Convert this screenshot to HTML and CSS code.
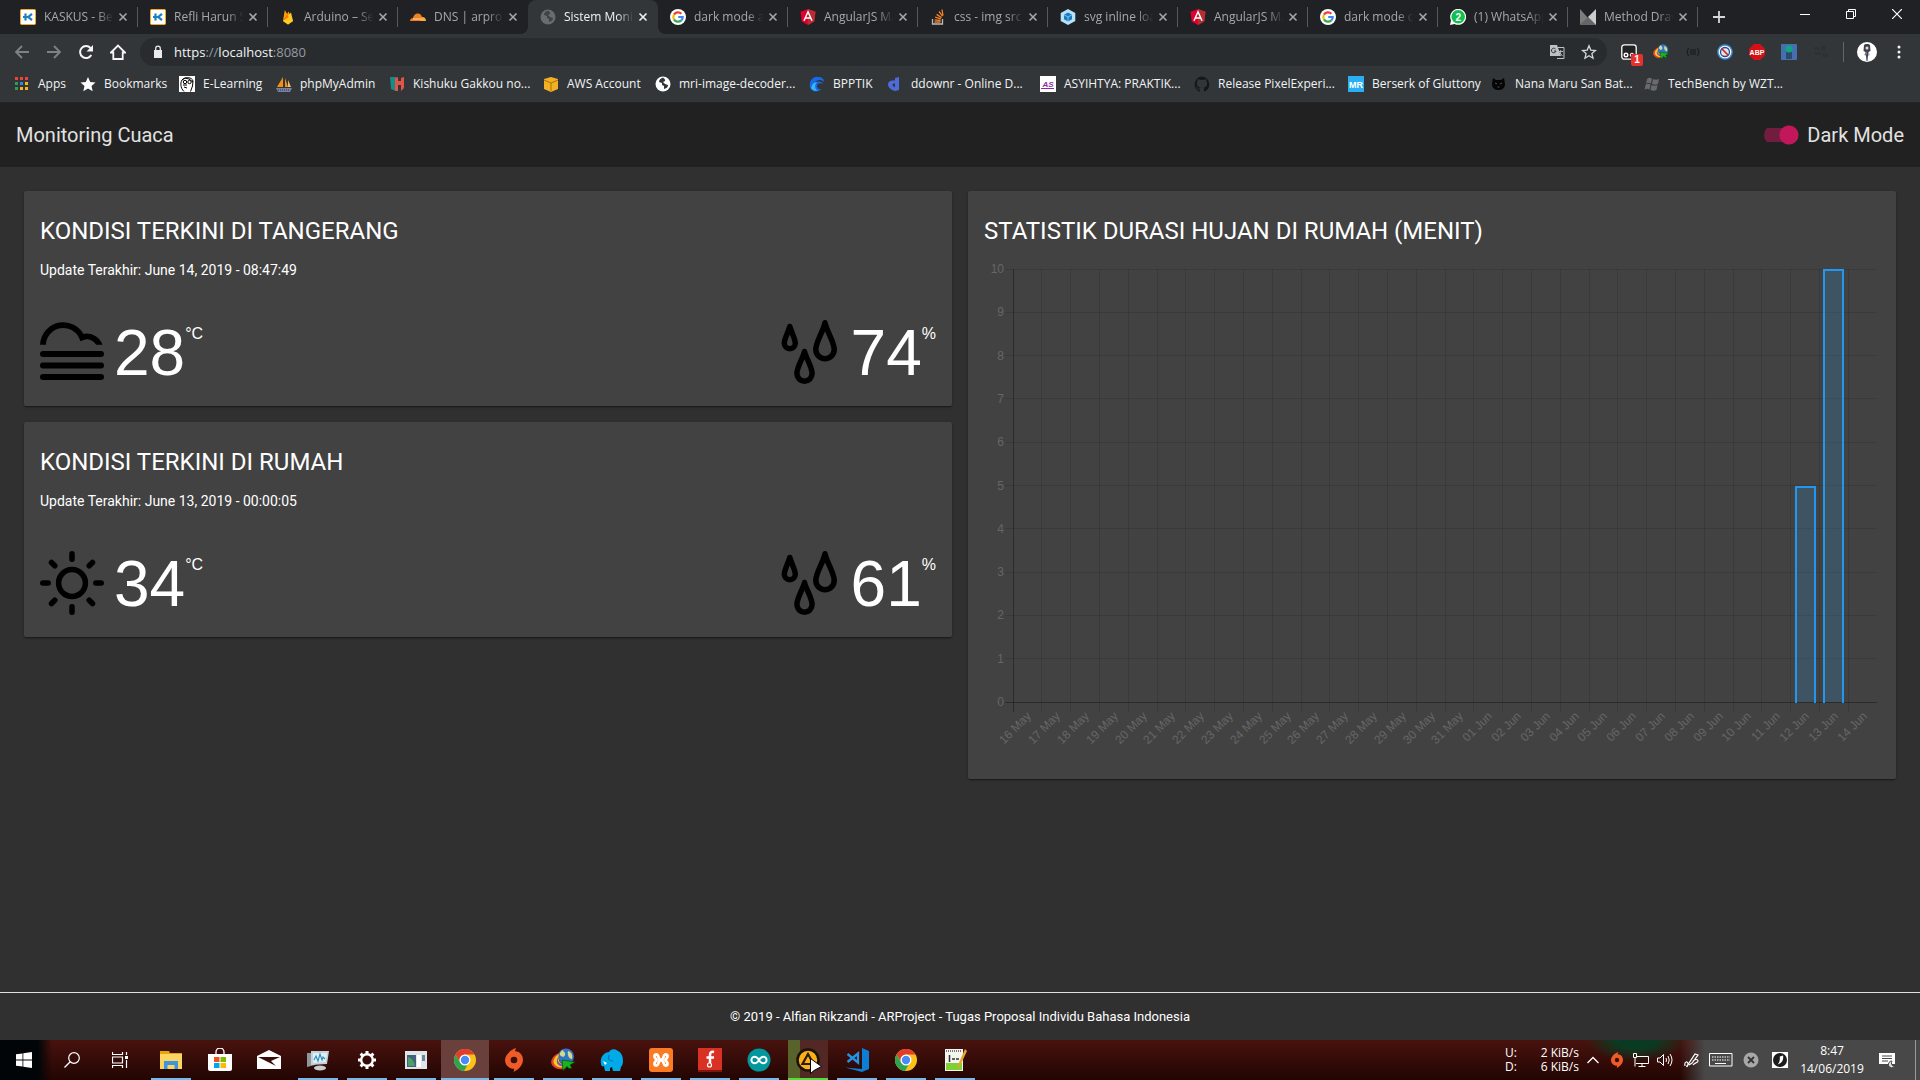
FILE: index.html
```html
<!DOCTYPE html>
<html lang="id">
<head>
<meta charset="utf-8">
<meta name="viewport" content="width=device-width, initial-scale=1">
<title>Sistem Monitoring Cuaca</title>
<link rel="stylesheet" href="styles.css">
</head>
<body>

<svg class="sprite" aria-hidden="true">
  <symbol id="i-close" viewBox="0 0 10 10"><path d="M1.5 1.5l7 7M8.500 1.500l-7 7" stroke="currentColor" stroke-width="1.6" fill="none"/></symbol>
  <symbol id="i-kaskus" viewBox="0 0 16 16"><rect x=".5" y=".5" width="15" height="15" rx="1" fill="#fff" stroke="#f7a823"/><path d="M5.500 4.500v7M12 4.800L8.200 8l3.800 3.200M3 8h6" stroke="#1c7fc4" stroke-width="2.200" fill="none"/></symbol>
  <symbol id="i-firebase" viewBox="0 0 16 16"><path d="M3 12L4.800 1l2.400 4L8.500 2.500 13 12l-5 3.500z" fill="#ffa000"/><path d="M3 12l8-8.500L13 12l-5 3.500z" fill="#ffca28"/><path d="M3 12l4.200-7 1.500 3z" fill="#f57c00"/></symbol>
  <symbol id="i-cloudflare" viewBox="0 0 16 16"><path d="M0 12c0-2 1.500-3 3-3 .5-3 3-5 5.500-4.500 2 .3 3 2 3.500 3.500l-1 4z" fill="#f38020"/><path d="M10.500 12l1-4c3-.2 4.500 1.500 4.500 4z" fill="#faae40"/><path d="M3 10h8" stroke="#fff" stroke-width=".7"/></symbol>
  <symbol id="i-globe" viewBox="0 0 16 16"><circle cx="8" cy="8" r="7.500" fill="currentColor"/><path d="M8 1.500c-3 1-4 3-4 4.500l3 1v2l2 1v3c3-1 4-2 4-4l-3-1-2-2 2-1V3.500z" fill="var(--land)"/></symbol>
  <symbol id="i-google" viewBox="0 0 16 16"><circle cx="8" cy="8" r="8" fill="#fff"/><g fill="none" stroke-width="2.200"><path d="M11.400 4.700A4.700 4.700 0 0 0 4 5.600" stroke="#ea4335"/><path d="M4 5.600a4.700 4.700 0 0 0 0 4.800" stroke="#fbbc05"/><path d="M4 10.400a4.700 4.700 0 0 0 7.300 1" stroke="#34a853"/><path d="M11.300 11.400A4.700 4.700 0 0 0 12.700 8H8.200" stroke="#4285f4"/></g></symbol>
  <symbol id="i-angular" viewBox="0 0 16 16"><path d="M8 0l7.500 2.700-1.200 9.800L8 16l-6.300-3.500L.5 2.700z" fill="#dd0031"/><path d="M8 0l7.500 2.700-1.200 9.800L8 16z" fill="#b52e31"/><path d="M4 11.800L8 2.800l4 9M5.500 9h5" stroke="#fff" stroke-width="1.500" fill="none"/></symbol>
  <symbol id="i-stack" viewBox="0 0 16 16"><path d="M2.500 10v5h10v-5" stroke="#bcbbbb" stroke-width="1.300" fill="none"/><path d="M4.500 13h6M4.600 10.800l6 .7M5.200 8.200l5.600 1.700M6.600 5.400l5 3.200M9 2.500l3.600 4.700M12 .5l1 6" stroke="#f48024" stroke-width="1.300"/></symbol>
  <symbol id="i-webpack" viewBox="0 0 16 16"><path d="M8 0l7.300 4v8L8 16 .7 12V4z" fill="#b6e2f8"/><path d="M8 3.500l4 2.200v4.600L8 12.500l-4-2.200V5.700z" fill="#1c78c0"/><path d="M8 8v4.500M8 8l4-2.200M8 8L4 5.800" stroke="#8ed6fb" stroke-width=".8"/></symbol>
  <symbol id="i-whatsapp" viewBox="0 0 16 16"><path d="M0 16l1-4.500A8 8 0 1 1 4.500 15z" fill="#fff"/><circle cx="8.200" cy="7.800" r="6.800" fill="#12c04f"/><text x="8.200" y="11.500" text-anchor="middle" font-family="Liberation Sans, sans-serif" font-weight="700" font-size="10" fill="#fff">2</text></symbol>
  <symbol id="i-method" viewBox="0 0 16 16"><path d="M0 0l8 9-8 7z" fill="#7d7d7d"/><path d="M0 16L8 8l8 8z" fill="#666"/><path d="M16 0L8 8l8 8z" fill="#ccc"/></symbol>
  <symbol id="i-chrome" viewBox="0 0 24 24"><circle cx="12" cy="12" r="11" fill="#fbc116"/><path d="M2.500 6.500a11 11 0 0 1 19 0H12A5.500 5.500 0 0 0 7 14z" fill="#e33b2e"/><path d="M2.500 6.500A11 11 0 0 0 11 23l4.800-8.300A5.500 5.500 0 0 1 7.200 14.700z" fill="#31a350"/><circle cx="12" cy="12" r="5.500" fill="#fff"/><circle cx="12" cy="12" r="4.200" fill="#4a8af4"/></symbol>
  <symbol id="i-origin" viewBox="0 0 24 24"><path d="M14 0c-.5 1.500-1 2.500-.8 3.200C18 3.500 21 7 21 12c0 5-5 10-9.500 12 .6-1.500.8-2.500.6-3.300C6.500 20.500 3 17 3 12 3 7 9 1.500 14 0z" fill="#ee5b28"/><circle cx="12" cy="12" r="3.300" fill="#38100a"/></symbol>
  <symbol id="i-idm" viewBox="0 0 24 24"><circle cx="15" cy="8.500" r="8" fill="#3474c4"/><path d="M11 2c3 2 5 5 1 7-2-1-4-2-3-4zM17 3c4 1 5 5 4 8-3 0-5-4-4-8z" fill="#cfdb91"/><path d="M8 5C1 8-2 14 2 18c3 4 9 4 13 2l-1-4c-5 1-8-4-6-11z" fill="#e6442a"/><path d="M8 6C3 9 1 14 4 17c3 3 7 3 11 2l-1-3c-5 1-8-4-6-10z" fill="#f5cd1a"/><path d="M8 8c-3 5 0 8 6 9v1.500C7 19 3 14 8 8z" fill="#7a4fc7"/><path d="M11 12l13 2-5 3 2 3-3 .5-2-2-4 4z" fill="#15b61c" stroke="#074a0a" stroke-width=".7"/></symbol>
</svg>

<div class="browser">
  <header class="chrome">
    <div class="tabstrip">
      <nav class="tabs" aria-label="Tab">
        <div class="tab"><svg class="fav"><use href="#i-kaskus"/></svg><span class="tab-title">KASKUS - Berb</span><button class="tab-close" aria-label="Tutup"><svg><use href="#i-close"/></svg></button></div>
        <div class="tab"><svg class="fav"><use href="#i-kaskus"/></svg><span class="tab-title">Refli Harun Se</span><button class="tab-close" aria-label="Tutup"><svg><use href="#i-close"/></svg></button></div>
        <div class="tab"><svg class="fav"><use href="#i-firebase"/></svg><span class="tab-title">Arduino – Serv</span><button class="tab-close" aria-label="Tutup"><svg><use href="#i-close"/></svg></button></div>
        <div class="tab before-active"><svg class="fav"><use href="#i-cloudflare"/></svg><span class="tab-title">DNS | arproject</span><button class="tab-close" aria-label="Tutup"><svg><use href="#i-close"/></svg></button></div>
        <div class="tab active"><svg class="fav globe-dim"><use href="#i-globe"/></svg><span class="tab-title">Sistem Monito</span><button class="tab-close" aria-label="Tutup"><svg><use href="#i-close"/></svg></button></div>
        <div class="tab"><svg class="fav"><use href="#i-google"/></svg><span class="tab-title">dark mode ang</span><button class="tab-close" aria-label="Tutup"><svg><use href="#i-close"/></svg></button></div>
        <div class="tab"><svg class="fav"><use href="#i-angular"/></svg><span class="tab-title">AngularJS Mat</span><button class="tab-close" aria-label="Tutup"><svg><use href="#i-close"/></svg></button></div>
        <div class="tab"><svg class="fav"><use href="#i-stack"/></svg><span class="tab-title">css - img src sv</span><button class="tab-close" aria-label="Tutup"><svg><use href="#i-close"/></svg></button></div>
        <div class="tab"><svg class="fav"><use href="#i-webpack"/></svg><span class="tab-title">svg inline load</span><button class="tab-close" aria-label="Tutup"><svg><use href="#i-close"/></svg></button></div>
        <div class="tab"><svg class="fav"><use href="#i-angular"/></svg><span class="tab-title">AngularJS Mat</span><button class="tab-close" aria-label="Tutup"><svg><use href="#i-close"/></svg></button></div>
        <div class="tab"><svg class="fav"><use href="#i-google"/></svg><span class="tab-title">dark mode css</span><button class="tab-close" aria-label="Tutup"><svg><use href="#i-close"/></svg></button></div>
        <div class="tab"><svg class="fav"><use href="#i-whatsapp"/></svg><span class="tab-title">(1) WhatsApp</span><button class="tab-close" aria-label="Tutup"><svg><use href="#i-close"/></svg></button></div>
        <div class="tab"><svg class="fav"><use href="#i-method"/></svg><span class="tab-title">Method Draw</span><button class="tab-close" aria-label="Tutup"><svg><use href="#i-close"/></svg></button></div>
        <button class="new-tab" aria-label="Tab baru"><svg viewBox="0 0 14 14"><path d="M7 1v12M1 7h12" stroke="currentColor" stroke-width="1.800"/></svg></button>
      </nav>
      <div class="window-buttons">
        <button aria-label="Minimalkan"><svg viewBox="0 0 10 10"><path d="M0 5.500h10" stroke="currentColor"/></svg></button>
        <button aria-label="Pulihkan"><svg viewBox="0 0 10 10"><path d="M.5 2.500h7v7h-7zM2.500 2.500v-2h7v7h-2" fill="none" stroke="currentColor"/></svg></button>
        <button aria-label="Tutup jendela"><svg viewBox="0 0 10 10"><path d="M0 0l10 10M10 0L0 10" stroke="currentColor" stroke-width="1.200"/></svg></button>
      </div>
    </div>

    <div class="toolbar">
      <button class="nav-btn dim" aria-label="Kembali"><svg viewBox="0 0 16 16"><path d="M15 8H2M8 2L2 8l6 6" fill="none" stroke="currentColor" stroke-width="1.800"/></svg></button>
      <button class="nav-btn dim" aria-label="Maju"><svg viewBox="0 0 16 16"><path d="M1 8h13M8 2l6 6-6 6" fill="none" stroke="currentColor" stroke-width="1.800"/></svg></button>
      <button class="nav-btn" aria-label="Muat ulang"><svg viewBox="0 0 16 16"><path d="M13.300 11A6 6 0 1 1 12.500 4" fill="none" stroke="currentColor" stroke-width="2"/><path d="M15 1v6.500H8.500z" fill="currentColor"/></svg></button>
      <button class="nav-btn" aria-label="Beranda"><svg viewBox="0 0 16 16"><path d="M1 8.500L8 1.500l7 7h-2.300V15H3.300V8.500z" fill="none" stroke="currentColor" stroke-width="1.800"/></svg></button>
      <div class="omnibox">
        <svg class="lock" viewBox="0 0 10 14"><path d="M1 5h8v8H1z" fill="currentColor"/><path d="M2.700 5.500V3.500a2.300 2.300 0 0 1 4.600 0v2" fill="none" stroke="currentColor" stroke-width="1.300"/></svg>
        <span class="url">https<i>://</i>localhost<i>:8080</i></span>
        <button class="omni-btn" aria-label="Terjemahkan"><svg viewBox="0 0 16 16"><path d="M1 1h7l4 11H1z" fill="#bdc1c6"/><path d="M9 3.500h6v11H8" fill="none" stroke="#bdc1c6"/><path d="M6.500 5A2.300 2.300 0 1 0 7 7H5" fill="none" stroke="#33373a"/><path d="M9.500 7.500h4.500M11.700 6v1.500c-.3 2-1 3-1.700 4M11 9l2.500 3" stroke="#bdc1c6" fill="none" stroke-width=".9"/></svg></button>
        <button class="omni-btn" aria-label="Tambahkan bookmark"><svg viewBox="0 0 16 16"><path d="M8 1.800l1.800 4.300 4.700.4-3.600 3.100 1.100 4.600L8 11.700l-4 2.500 1.100-4.600L1.500 6.500l4.700-.4z" fill="none" stroke="#d5d8db" stroke-width="1.300"/></svg></button>
      </div>
      <div class="extensions">
        <button aria-label="Tampermonkey"><svg viewBox="0 0 16 16"><rect x=".8" y=".8" width="14.400" height="14.400" rx="2.500" fill="#222" stroke="#fff" stroke-width="1.300"/><circle cx="5" cy="11" r="1.800" fill="none" stroke="#fff" stroke-width="1.400"/><circle cx="11" cy="11" r="1.800" fill="none" stroke="#fff"/></svg><span class="badge">1</span></button>
        <button aria-label="Internet Download Manager"><svg><use href="#i-idm"/></svg></button>
        <button aria-label="JSON"><svg viewBox="0 0 16 16"><path d="M4 4Q2.500 4 2.800 6T1.500 8q1.500 0 1.300 2T4 12M12 4q1.500 0 1.200 2t1.300 2q-1.500 0-1.300 2T12 12M5 6h6M5 8h6M5 10h6" fill="none" stroke="#17191b"/></svg></button>
        <button aria-label="Pemblokir"><svg viewBox="0 0 16 16"><circle cx="8" cy="8" r="7.800" fill="#3a8fd8"/><circle cx="8" cy="8" r="6.300" fill="#fff"/><circle cx="8" cy="8" r="4.500" fill="#dfe4ee" stroke="#35477c" stroke-width="1.300"/><path d="M5 5l6 6" stroke="#d52525" stroke-width="1.700"/></svg></button>
        <button aria-label="Adblock Plus"><svg viewBox="0 0 16 16"><path d="M5 0h6l5 5v6l-5 5H5l-5-5V5z" fill="#d80f13"/><text x="8" y="10.500" text-anchor="middle" font-family="Liberation Sans, sans-serif" font-weight="700" font-size="7" fill="#fff">ABP</text></svg></button>
        <button aria-label="Ekstensi"><svg viewBox="0 0 16 16"><rect width="16" height="16" rx="1" fill="#456fae"/><rect x="5" y="6" width="6" height="9" fill="#2d4a6c"/><circle cx="8" cy="5" r="3.600" fill="#11a587"/></svg></button>
        <button aria-label="Ekstensi nonaktif"><svg viewBox="0 0 16 16"><path d="M1 3h5v3H1zM8 2h5v4H8zM2 8h6v3H2zM9 9h6v4H9z" fill="#2e3134"/></svg></button>
      </div>
      <button class="avatar" aria-label="Profil"><svg viewBox="0 0 20 20"><circle cx="10" cy="10" r="10" fill="#fff"/><path d="M7 3l1.500-1h3l1.500 1 .5 6-2 1 1 3-1.500.5L10.500 19h-1L9 13.500 7.500 13l1-3-2-1z" fill="#3e4350"/><circle cx="10" cy="6" r="1.500" fill="#f3d3c6"/><path d="M8.500 10h1v3h-1zM11 10h1v3h-1z" fill="#9ba4b4"/></svg></button>
      <button class="menu" aria-label="Menu"><svg viewBox="0 0 4 16"><circle cx="2" cy="3" r="1.500"/><circle cx="2" cy="8" r="1.500"/><circle cx="2" cy="13" r="1.500"/></svg></button>
    </div>

    <nav class="bookmarks" aria-label="Bookmark">
      <a href="#"><svg viewBox="0 0 16 16"><path d="M1 1h3v3H1zM6 1h3v3H6zM11 1h3v3h-3z" fill="#f0443a"/><path d="M1 6h3v3H1z" fill="#2f9c55"/><path d="M6 6h3v3H6z" fill="#2f86ee"/><path d="M11 6h3v3h-3zM6 11h3v3H6zM11 11h3v3h-3z" fill="#f5b417"/><path d="M1 11h3v3H1z" fill="#2f9c55"/></svg>Apps</a>
      <a href="#"><svg viewBox="0 0 16 16"><path d="M8 1l2.200 4.900 5.300.5-4 3.600 1.200 5.300L8 12.500l-4.700 2.800L4.500 10l-4-3.600 5.300-.5z" fill="#fff"/></svg>Bookmarks</a>
      <a href="#"><svg viewBox="0 0 16 16"><path d="M0 0h16v16H0z" fill="#fff"/><path d="M5 15.500C1 12 1 5 4 3c3-2 9-2 10 2l-.5 5-2 5.500M3 4l3-2 4 1 4 3M4 9h4M5 11l3 1" fill="none" stroke="#000"/><circle cx="6" cy="6" r="1.700" fill="none" stroke="#000"/><circle cx="10.500" cy="6" r="1.700" fill="none" stroke="#000"/></svg>E-Learning</a>
      <a href="#"><svg viewBox="0 0 16 16"><path d="M7 1L1 11h6zM9 2v9h3z" fill="#f29111"/><path d="M12 4v7h3z" fill="#f7bb6b"/><path d="M0 12h16l-2 4H2z" fill="#787ea6"/><path d="M2 14h11" stroke="#323639" stroke-dasharray="1 1"/></svg>phpMyAdmin</a>
      <a href="#"><svg viewBox="0 0 16 16"><path d="M1 1h6v14l-5-2z" fill="#148d86"/><path d="M6 2l3-1v4h3V2l3-1v11l-3 3v-6H9v6H6z" fill="#e05548"/></svg>Kishuku Gakkou no...</a>
      <a href="#"><svg viewBox="0 0 16 16"><path d="M1 3l7-2 7 2v10l-7 3-7-3z" fill="#f4b024"/><path d="M1 4l7 3 7-3M8 7v8" stroke="#a8740a" fill="none"/></svg>AWS Account</a>
      <a href="#"><svg class="globe-light"><use href="#i-globe"/></svg>mri-image-decoder...</a>
      <a href="#"><svg viewBox="0 0 16 16"><path d="M1 11C0 5 4 0 9 1c4 0 6 2 6 5-3-3-7-2-9 0 3-1 7-1 8 2-4-2-6 0-6 2 0 3 3 4 5 3-4 4-11 3-12-2z" fill="#1769e8"/><path d="M2 12c1-4 3-6 6-6-3 3-2 8 1 9-4 0-6-1-7-3z" fill="#37b6f5"/></svg>BPPTIK</a>
      <a href="#"><svg viewBox="0 0 16 16"><path d="M12 1v13l-4 1C4 14 1 11 1 8.500c0-3 3-4.500 7-4V2zM8 7.500c-2.500-.2-3 1-2 2.500l2 1.500z" fill="#4e6bdc" fill-rule="evenodd"/></svg>ddownr - Online D...</a>
      <a href="#"><svg viewBox="0 0 16 16"><path d="M0 0h16v16H0z" fill="#fff"/><text x="8" y="10.500" text-anchor="middle" font-family="Liberation Sans, sans-serif" font-style="italic" font-weight="700" font-size="8" fill="#8d28a0">AS</text><path d="M1 12.500h13" stroke="#8d28a0"/></svg>ASYIHTYA: PRAKTIK...</a>
      <a href="#"><svg viewBox="0 0 16 16"><path d="M8 .4a8 8 0 0 0-2.500 15.300c.4 0 .5-.2.500-.5v-1.500c-2.200.5-2.700-1-2.700-1-.4-1-1-1.200-1-1.200-.6-.5.1-.5.1-.5.8 0 1.300.8 1.300.8.7 1.300 1.900.9 2.300.7.1-.5.3-.9.5-1.100-1.700-.2-3.600-.9-3.600-4 0-.9.300-1.600.8-2.200 0-.2-.3-1 .1-2.100 0 0 .7-.2 2.200.8a7.600 7.600 0 0 1 4 0c1.500-1 2.200-.8 2.200-.8.4 1.100.1 1.900.1 2.100.5.600.8 1.300.8 2.200 0 3.100-1.900 3.800-3.700 4 .3.300.6.800.6 1.500v2.200c0 .3.100.5.600.5A8 8 0 0 0 8 .4z" fill="#15171a"/></svg>Release PixelExperi...</a>
      <a href="#"><svg viewBox="0 0 16 16"><path d="M0 0h16v16H0z" fill="#2ab0f2"/><text x="8" y="12" text-anchor="middle" font-family="Liberation Sans, sans-serif" font-weight="700" font-size="9" fill="#fff">MR</text></svg>Berserk of Gluttony</a>
      <a href="#"><svg viewBox="0 0 16 16"><path d="M2 2l3 2h5l3-2 1 6c0 4-3 6-6.500 6S1 12 1 8z" fill="#050505"/><path d="M4 7l2 1M11 7L9 8M6.500 11h2" stroke="#555"/></svg>Nana Maru San Bat...</a>
      <a href="#"><svg viewBox="0 0 16 16"><path d="M3 3q2-2 5-.5l-1 5q-3-1.500-5 .5zM9 3q3 1.500 6 0l-1 5q-3 1.500-6 0zM1.500 9q2.500-2 5-.5l-1 5q-3-1.500-5 .5zM7.500 9q3 1.500 6 0l-1 5q-3 1.500-6 0z" fill="#6a6a6a"/></svg>TechBench by WZT...</a>
    </nav>
  </header>

  <div class="page">
    <header class="appbar">
      <h1>Monitoring Cuaca</h1>
      <label class="switch"><input type="checkbox" role="switch" checked>Dark Mode</label>
    </header>

    <main class="content">
      <div class="column">
        <section class="card">
          <h2>KONDISI TERKINI DI TANGERANG</h2>
          <p class="updated">Update Terakhir: June 14, 2019 - 08:47:49</p>
          <div class="readings">
            <div class="reading">
              <svg class="weather" viewBox="0 0 64 64" fill="none" stroke="#000">
                <clipPath id="above-fog"><path d="M0 0h64v24.700H0z"/></clipPath>
                <path clip-path="url(#above-fog)" stroke-width="5.800" d="M3 26v-1.300A20.300 20.300 0 0 1 42 17.500 13.200 13.200 0 0 1 60.200 30"/>
                <path stroke-width="6" stroke-linecap="round" d="M3 34h58M3 45.500h58M3 57h58"/>
              </svg>
              <span class="value">28</span><span class="unit">°C</span>
            </div>
            <div class="reading">
              <svg class="weather" viewBox="0 0 64 64" fill="none" stroke="#000" stroke-width="5.500" stroke-linejoin="round">
                <path d="M12.800 6.500C11.500 11.500 7.300 19 7.300 23.200a5.500 5.500 0 0 0 11 0C18.300 19 14 11.500 12.800 6.500z"/>
                <path d="M48 2.800C46 12 38.800 22 38.800 29.500a9.200 9.200 0 0 0 18.400 0C57.200 22 50 12 48 2.800z"/>
                <path d="M27.500 31.500C26 38 19.900 47 19.900 53.600a7.600 7.600 0 0 0 15.200 0C35.100 47 29 38 27.500 31.500z"/>
              </svg>
              <span class="value">74</span><span class="unit">%</span>
            </div>
          </div>
        </section>

        <section class="card">
          <h2>KONDISI TERKINI DI RUMAH</h2>
          <p class="updated">Update Terakhir: June 13, 2019 - 00:00:05</p>
          <div class="readings">
            <div class="reading">
              <svg class="weather" viewBox="0 0 64 64" fill="none" stroke="#000" stroke-width="5.500" stroke-linecap="round">
                <circle cx="32" cy="32" r="13.400"/>
                <path d="M32 2.800v5.400M32 55.800v5.400M2.800 32h5.400M55.800 32h5.400M11.500 11.500l3.300 3.300M49.200 49.200l3.300 3.300M11.500 52.500l3.300-3.300M49.200 14.800l3.300-3.300"/>
              </svg>
              <span class="value">34</span><span class="unit">°C</span>
            </div>
            <div class="reading">
              <svg class="weather" viewBox="0 0 64 64" fill="none" stroke="#000" stroke-width="5.500" stroke-linejoin="round">
                <path d="M12.800 6.500C11.500 11.500 7.300 19 7.300 23.200a5.500 5.500 0 0 0 11 0C18.300 19 14 11.500 12.800 6.500z"/>
                <path d="M48 2.800C46 12 38.800 22 38.800 29.500a9.200 9.200 0 0 0 18.400 0C57.200 22 50 12 48 2.800z"/>
                <path d="M27.500 31.500C26 38 19.900 47 19.900 53.600a7.600 7.600 0 0 0 15.200 0C35.100 47 29 38 27.500 31.500z"/>
              </svg>
              <span class="value">61</span><span class="unit">%</span>
            </div>
          </div>
        </section>
      </div>

      <section class="card stats">
        <h2>STATISTIK DURASI HUJAN DI RUMAH (MENIT)</h2>
        <svg class="chart" id="rain-chart" viewBox="0 0 896 508" role="img" aria-label="Durasi hujan per hari"></svg>
      </section>
    </main>

    <footer class="footer">© 2019 - Alfian Rikzandi - ARProject - Tugas Proposal Individu Bahasa Indonesia</footer>
  </div>
</div>

<div class="taskbar">
  <div class="system">
    <button aria-label="Start"><svg viewBox="0 0 16 16"><path d="M0 2.300l6.500-.9v6.200H0zM7.300 1.300L16 0v7.600H7.300zM0 8.400h6.500v6.200L0 13.700zM7.300 8.400H16V16l-8.700-1.300z" fill="#fff"/></svg></button>
    <button aria-label="Cari"><svg viewBox="0 0 16 16"><circle cx="10" cy="6" r="5.300" fill="none" stroke="#fff" stroke-width="1.200"/><path d="M6.200 9.800L.5 15.500" stroke="#fff" stroke-width="1.300"/></svg></button>
    <button aria-label="Tampilan tugas"><svg viewBox="0 0 16 16"><path d="M.5 0v2.500h10V0M.5 16v-2.500h10V16M.5 5h10v6H.5zM14.500 0v3M14.500 8v8" fill="none" stroke="#fff" stroke-width="1.200"/><path d="M13 4h3v3h-3z" fill="#fff"/></svg></button>
  </div>
  <div class="apps">
    <button class="open" aria-label="File Explorer"><svg viewBox="0 0 24 24"><path d="M1 3h9l1 2h12v16H1z" fill="#e5a50a"/><path d="M1 6h22v15H1z" fill="#fcd462"/><path d="M5 21v-8h14v8h-3.500v-4h-7v4z" fill="#3b96dd"/></svg></button>
    <button aria-label="Microsoft Store"><svg viewBox="0 0 24 24"><path d="M8 7V4a4 4 0 0 1 8 0v3" fill="none" stroke="#fff" stroke-width="1.300"/><path d="M0 6h24v15q0 2-2 2H2q-2 0-2-2z" fill="#fff"/><path d="M6 9h5.500v5H6z" fill="#f25022"/><path d="M12.500 9H18v5h-5.500z" fill="#7fba00"/><path d="M6 15h5.500v5H6z" fill="#00a4ef"/><path d="M12.500 15H18v5h-5.500z" fill="#ffb900"/></svg></button>
    <button aria-label="Mail"><svg viewBox="0 0 24 24"><path d="M0 8l12-6 12 6v13H0z" fill="#fff"/><path d="M1 9h22l-9 4 5 5z" fill="#380d09"/></svg></button>
    <button class="open" aria-label="Monitor Sumber Daya"><svg viewBox="0 0 24 24"><path d="M1 5h8v12l-8 2z" fill="#8c989a"/><path d="M5 3l18 0-2 13-16 1z" fill="#c9cfd2"/><path d="M7 5h14l-1.500 9L7 15z" fill="#d9f0fa"/><path d="M8 12l2-4 2 5 2-7 2 6 1-3 2 2" fill="none" stroke="#2f8ab8" stroke-width="1.100"/><ellipse cx="14" cy="20" rx="6" ry="2.500" fill="#c8ced1"/></svg></button>
    <button class="open" aria-label="Pengaturan"><svg viewBox="0 0 24 24"><circle cx="12" cy="12" r="5.800" fill="none" stroke="#fff" stroke-width="2.400"/><path d="M12 3v3M12 18v3M3 12h3M18 12h3M5.600 5.600l2.200 2.200M16.200 16.200l2.200 2.200M5.600 18.400l2.200-2.200M16.200 7.800l2.200-2.200" stroke="#fff" stroke-width="3"/></svg></button>
    <button class="open" aria-label="Aplikasi"><svg viewBox="0 0 24 24"><path d="M1 3h22v18H1z" fill="#dfe5e8"/><path d="M3 7h9v12H3z" fill="#43617e"/><path d="M4 9q6 2 7 9H4z" fill="#4f9d67"/><path d="M13 7h4v12h-4z" fill="#fff"/><path d="M18 7h3v6h-3z" fill="#6b869c"/></svg></button>
    <button class="open current" aria-label="Google Chrome"><svg><use href="#i-chrome"/></svg></button>
    <button class="open" aria-label="Origin"><svg><use href="#i-origin"/></svg></button>
    <button class="open" aria-label="Internet Download Manager"><svg><use href="#i-idm"/></svg></button>
    <button class="open" aria-label="MAMP"><svg viewBox="0 0 24 24"><path d="M9 4c1-3 6-4 9-1 4 2 5 6 5 10 0 3-1 5-2 6l-1 4h-7l-1-4-2 1v3H5l-1-5c-1 1-3 0-3-2C0 11 2 5 9 4z" fill="#00a9e8"/><path d="M3 13l2 4 2-2z" fill="#fff"/><path d="M9 7q-2 6 4 6" fill="none" stroke="#0578ae" stroke-width="1.200"/></svg></button>
    <button class="open" aria-label="XAMPP"><svg viewBox="0 0 24 24"><rect width="24" height="24" rx="3" fill="#fb7a24"/><path d="M12 12C9 12 10 6.500 7.500 6.500S5 9 6.500 10.500 8 12 6.500 13.500 5 17.500 7.500 17.500 9 12 12 12s2 5.500 4.500 5.500 2.500-2.500 1-4-1.500-1.500 0-3 1.500-4-1-4S15 12 12 12z" fill="none" stroke="#fff" stroke-width="2.800"/></svg></button>
    <button class="open" aria-label="FlashGet"><svg viewBox="0 0 24 24"><path d="M0 0h24v24H0z" fill="#d93225"/><path d="M0 22h24v2H0z" fill="#7d1710"/><path d="M16 4q-4-1-4 3v8M8.500 9.500H16" fill="none" stroke="#fff" stroke-width="2.500"/><circle cx="11.500" cy="17" r="2" fill="none" stroke="#fff" stroke-width="1.200"/></svg></button>
    <button class="open" aria-label="Arduino"><svg viewBox="0 0 24 24"><circle cx="12" cy="12" r="11.500" fill="#00979d"/><path d="M12 12C10.500 9.500 9.500 8.700 7.700 8.700a3.300 3.300 0 0 0 0 6.600c1.800 0 2.800-.8 4.300-3.300s2.500-3.300 4.300-3.300a3.300 3.300 0 0 1 0 6.600c-1.800 0-2.800-.8-4.300-3.300z" fill="none" stroke="#fff" stroke-width="1.900"/></svg></button>
    <button class="open alert" aria-label="AIMP"><svg viewBox="0 0 24 24"><circle cx="12" cy="12" r="10.500" fill="#fbb017" stroke="#17120c" stroke-width="2.500"/><path d="M12 6l5.500 10h-11z" fill="none" stroke="#2b1b08" stroke-width="2.200"/></svg><svg class="cursor" viewBox="0 0 12 19"><path d="M.5.500v15l3.500-3 7.500-4z" fill="#fff" stroke="#000"/></svg></button>
    <button class="open" aria-label="Visual Studio Code"><svg viewBox="0 0 24 24"><path d="M17 0l7 3v18l-7 3L0 19.500l17 1.500z" fill="#0a7fd4"/><path d="M2.500 6l10.500 8.500V5.500L2.500 14" fill="none" stroke="#2195e6" stroke-width="2.300"/></svg></button>
    <button class="open" aria-label="Google Chrome"><svg><use href="#i-chrome"/></svg></button>
    <button class="open" aria-label="Notepad++"><svg viewBox="0 0 24 24"><path d="M2 1h18v22H2z" fill="#f3f5ee"/><path d="M3 15h16v7H3z" fill="#7fd034"/><path d="M3 3h16" stroke="#777" stroke-width="2" stroke-dasharray="1 1"/><path d="M6.500 7v7M9 11h3M13 11h3" stroke="#333" stroke-width="1.500"/><path d="M22 1L15 17l-1 3 3-2L24 3z" fill="#e3a52e"/></svg></button>
  </div>

  <div class="tray">
    <dl class="net"><div><dt>U:</dt><dd>2 KiB/s</dd></div><div><dt>D:</dt><dd>6 KiB/s</dd></div></dl>
    <button aria-label="Ikon tersembunyi"><svg viewBox="0 0 16 16"><path d="M2.500 11L8 5.500l5.500 5.500" fill="none" stroke="#fff" stroke-width="1.300"/></svg></button>
    <button aria-label="Origin"><svg><use href="#i-origin"/></svg></button>
    <button aria-label="Jaringan"><svg viewBox="0 0 16 16"><path d="M4 4.500h11.500v7H3M9 11.500v3M5.500 14.500h7M2 6v8.500M.5 1.500h3v4h-3z" fill="none" stroke="#fff"/></svg></button>
    <button aria-label="Volume"><svg viewBox="0 0 16 16"><path d="M.5 6v4H3l3.500 3.500v-11L3 6zM9 6q1 2 0 4M11 4q2.500 4 0 8M13 2q4 6 0 12" fill="none" stroke="#fff"/></svg></button>
    <button class="wide" aria-label="Pena"><svg viewBox="0 0 16 16"><path d="M1 14c-1-5 3-5 3-2s-2 3-1 2l8-12 3 1-6 8-3 2M9 9c2-2 5-2 5 0s-3 1-5 4" fill="none" stroke="#fff" stroke-width="1.200"/></svg></button>
    <button class="keys" aria-label="Keyboard"><svg viewBox="0 0 24 14"><path d="M.5.500h22.500v12.500H.5z" fill="none" stroke="#fff"/><path d="M3 4h18M3 7h18" stroke="#fff" stroke-dasharray="1.500 1"/><path d="M6 10.500h11" stroke="#fff"/></svg></button>
    <button class="wide" aria-label="Status"><svg viewBox="0 0 16 16"><circle cx="8" cy="8" r="7.500" fill="#a7a7a7"/><path d="M5 5l6 6M11 5l-6 6" stroke="#333" stroke-width="1.800"/></svg></button>
    <button class="wide" aria-label="Aplikasi"><svg viewBox="0 0 16 16"><path d="M0 0h16v16H0z" fill="#fff"/><circle cx="8" cy="8" r="7" fill="#1b1b1b"/><path d="M11 3.500c1 4-1 8-5.500 9 2-2 2.500-4 2.300-8z" fill="#fff"/></svg></button>
    <div class="clock"><time>8:47</time><time>14/06/2019</time></div>
    <button class="notify" aria-label="Pusat tindakan"><svg viewBox="0 0 16 16"><path d="M0 1h16v11h-3l-3 3.500V12H0z" fill="#fff"/><path d="M3 4h10M3 6.500h10M3 9h6" stroke="#484848"/><path d="M13 9a3.400 3.400 0 1 0 2.500 5.500A3.500 3.500 0 0 1 13 9z" fill="#ddd" stroke="#484848"/></svg></button>
  </div>
</div>

<script src="chart.js"></script>
</body>
</html>
```
FILE: styles.css
```css
:root {
  --strip: #202124;
  --toolbar: #323639;
  --card: #424242;
  --ui-font: "Open Sans", "Noto Sans", sans-serif;
}

* { box-sizing: border-box; }

body {
  margin: 0;
  min-height: 100vh;
  display: flex;
  flex-direction: column;
  background: #303030;
  color: #fff;
  font-family: Roboto, sans-serif;
}

button {
  display: flex;
  align-items: center;
  justify-content: center;
  padding: 0;
  border: 0;
  background: none;
  color: inherit;
  font: inherit;
}
button svg { flex: none; }

.sprite { position: absolute; width: 0; height: 0; }

.browser { flex: 1; display: flex; flex-direction: column; }

/* Browser window */
.chrome {
  background: var(--toolbar);
  border-bottom: 1px solid #252423;
  font: 12px/16px var(--ui-font);
}

.tabstrip {
  display: flex;
  justify-content: space-between;
  height: 34px;
  background: var(--strip);
}
.tabs { display: flex; padding-left: 8px; min-width: 0; }
.tab {
  position: relative;
  display: flex;
  align-items: center;
  width: 130px;
  padding: 0 7px 0 12px;
  color: #a4a8ad;
}
.tab::after {
  content: "";
  position: absolute;
  right: 0;
  top: 7px;
  width: 1px;
  height: 20px;
  background: #55585c;
}
.tab.active::after, .tab.before-active::after { display: none; }
.tab.active {
  background: var(--toolbar);
  border-radius: 8px 8px 0 0;
  color: #f1f3f4;
}
.tab.active::before {
  content: "";
  position: absolute;
  left: -8px;
  right: -8px;
  bottom: 0;
  height: 8px;
  background:
    radial-gradient(circle at 0 0, transparent 8px, var(--toolbar) 8px) left / 8px 8px no-repeat,
    radial-gradient(circle at 100% 0, transparent 8px, var(--toolbar) 8px) right / 8px 8px no-repeat;
}
.fav { flex: none; width: 16px; height: 16px; }
.globe-dim { color: #686c70; --land: #3f4347; }
.globe-light { color: #fff; --land: #323639; }
.tab-title {
  flex: 1;
  margin-left: 8px;
  overflow: hidden;
  white-space: nowrap;
  -webkit-mask-image: linear-gradient(90deg, #000 75%, transparent 98%);
  mask-image: linear-gradient(90deg, #000 75%, transparent 98%);
}
.tab-close { width: 16px; height: 16px; }
.tab-close svg { width: 10px; height: 10px; }
.new-tab { width: 28px; margin-left: 7px; color: #d5d7da; }
.new-tab svg { width: 14px; height: 14px; }
.window-buttons { display: flex; height: 28px; }
.window-buttons button { width: 46px; }
.window-buttons svg { width: 10px; height: 10px; }

.toolbar { display: flex; align-items: center; height: 34px; padding: 2px 3px 0 6px; }
.nav-btn { width: 32px; color: #f5f6f7; }
.nav-btn.dim { color: #7e8286; }
.nav-btn svg { width: 16px; height: 16px; }
.omnibox {
  flex: 1;
  display: flex;
  align-items: center;
  height: 28px;
  margin: 0 6px;
  padding: 0 2px 0 13px;
  border-radius: 14px;
  background: #282c2f;
}
.lock { width: 10px; height: 14px; color: #e8eaed; }
.url { flex: 1; margin-left: 11px; color: #f1f3f4; font-size: 13px; }
.url i { font-style: normal; color: #969ba0; }
.omni-btn { width: 32px; }
.omni-btn svg { width: 16px; height: 16px; }
.extensions { display: flex; }
.extensions button { position: relative; width: 32px; height: 24px; }
.extensions svg { width: 16px; height: 16px; }
.badge {
  position: absolute;
  right: 2px;
  bottom: -2px;
  width: 12px;
  height: 12px;
  border-radius: 2px;
  background: #e8302e;
  font: 700 10px/12px "Liberation Sans", sans-serif;
  text-align: center;
}
.avatar { height: 20px; margin-left: 6px; padding-left: 13px; border-left: 1px solid #63676a; }
.avatar svg { width: 20px; height: 20px; }
.menu { width: 36px; margin-left: 4px; }
.menu svg { width: 4px; height: 16px; fill: #f1f3f4; }

.bookmarks {
  display: grid;
  grid-template-columns: 66px 99px 97px 113px 154px 112px 154px 78px 153px 154px 154px 143px 153px 1fr;
  align-items: center;
  height: 34px;
  padding: 0 14px 2px;
}
.bookmarks a {
  display: flex;
  align-items: center;
  gap: 8px;
  color: #f1f3f4;
  text-decoration: none;
  white-space: nowrap;
}
.bookmarks svg { flex: none; width: 16px; height: 16px; }

/* Weather page */
.page { flex: 1; display: flex; flex-direction: column; background: #303030; }
.appbar {
  display: flex;
  align-items: center;
  justify-content: space-between;
  height: 64px;
  padding: 0 16px;
  background: #212121;
  color: #e2e2e2;
}
.appbar h1 { margin: 0; font-size: 20px; font-weight: 400; line-height: 24px; }
.switch { display: flex; align-items: center; gap: 8px; font-size: 20px; line-height: 24px; }
.switch input {
  appearance: none;
  width: 35px;
  height: 20px;
  margin: 0;
  background:
    radial-gradient(circle at 25px 10px, #c2185b 9px, transparent 10px),
    linear-gradient(#721c40, #721c40) 0 3px / 28px 14px no-repeat;
  border-radius: 10px;
}

.content {
  flex: 1;
  display: grid;
  grid-template-columns: 1fr 1fr;
  align-items: start;
  gap: 16px;
  padding: 24px;
}
.column { display: grid; gap: 16px; }
.card {
  padding: 24px 16px 20px;
  border-radius: 2px;
  background: var(--card);
  box-shadow: 0 1px 3px rgba(0, 0, 0, .3), 0 2px 1px -1px rgba(0, 0, 0, .3);
}
.card h2 { margin: 0; font-size: 24px; font-weight: 400; line-height: 32px; }
.updated { margin: 13px 0 40px; font-size: 14px; line-height: 20px; }
.readings { display: flex; justify-content: space-between; }
.reading { display: flex; align-items: flex-start; font-family: "Liberation Sans", Arial, sans-serif; }
.weather { width: 64px; height: 64px; }
.value { margin-left: 10px; font-size: 64px; line-height: 66px; }
.unit { margin-top: 4px; font-size: 16px; line-height: 20px; }

.stats { padding-bottom: 24px; }
.chart { display: block; width: 100%; height: auto; }
.chart text { font: 12px "Liberation Sans", Arial, sans-serif; fill: #666; text-anchor: end; }
.grid-line { stroke: rgba(0, 0, 0, .12); fill: none; }
.axis-line { stroke: rgba(0, 0, 0, .35); fill: none; }
.bar { fill: rgba(54, 162, 235, .2); }
.bar-edge { fill: none; stroke: #2196f3; stroke-width: 2; }

.footer {
  height: 48px;
  border-top: 1px solid #e0e0e0;
  font-size: 13px;
  line-height: 47px;
  text-align: center;
}

/* Desktop taskbar */
.taskbar {
  display: flex;
  height: 40px;
  background:
    radial-gradient(ellipse 50px 22px at calc(100% - 284px) 0, #0b3a22 40%, transparent),
    linear-gradient(90deg, #020507 38px, transparent 52px, transparent calc(100% - 240px), #484848 calc(100% - 215px)),
    linear-gradient(#48120e, #220502);
  font: 12px/16px var(--ui-font);
}
.system { display: flex; margin-right: 3px; }
.system button { width: 48px; }
.system svg { width: 16px; height: 16px; }
.apps { display: flex; flex: 1; gap: 1px; }
.apps button { position: relative; width: 48px; }
.apps svg { width: 24px; height: 24px; }
.apps .open::after {
  content: "";
  position: absolute;
  left: 4px;
  right: 4px;
  bottom: 0;
  height: 2px;
  background: #76b9ed;
}
.apps .current { background: #6a403c; }
.apps .current::after { left: 0; right: 0; }
.apps .alert { background: linear-gradient(90deg, transparent 4px, #58622a 4px 16px, #522724 16px 44px, transparent 44px); }
.apps .alert::after { background: #4fe03a; }
.apps .cursor { position: absolute; left: 26px; top: 18px; width: 12px; height: 19px; }

.tray { display: flex; align-items: center; border-right: 1px solid #9a9a9a; margin-right: 4px; }
.tray button { width: 24px; height: 40px; }
.tray svg { width: 16px; height: 16px; }
.tray .wide { width: 29px; }
.tray .keys { width: 30px; }
.tray .keys svg { width: 24px; height: 14px; }
.net { width: 74px; margin: 0 2px 0 0; line-height: 14px; }
.net div { display: flex; justify-content: space-between; }
.net dd { margin: 0; }
.clock { width: 76px; text-align: center; line-height: 18px; }
.clock time { display: block; }
.tray .notify { width: 34px; margin-right: 11px; }
```
FILE: chart.js
```js
// Daily rain duration in minutes, drawn as an SVG bar chart.
(function () {
  var NS = 'http://www.w3.org/2000/svg';
  var svg = document.getElementById('rain-chart');
  var left = 29, right = 893, top = 22, bottom = 455, max = 10;
  var days = [];
  for (var d = 16; d <= 31; d++) days.push(d + ' May');
  for (d = 1; d <= 14; d++) days.push((d < 10 ? '0' + d : d) + ' Jun');
  var rain = { '12 Jun': 5, '13 Jun': 10 };
  var step = (right - left) / days.length;

  function add(name, attrs, text) {
    var el = document.createElementNS(NS, name);
    for (var key in attrs) el.setAttribute(key, attrs[key]);
    if (text !== undefined) el.textContent = text;
    svg.appendChild(el);
  }
  function crisp(v) { return Math.floor(v) + 0.5; }
  function yOf(v) { return bottom - (bottom - top) * v / max; }

  for (var v = 0; v <= max; v++) {
    add('path', { 'class': v ? 'grid-line' : 'axis-line', d: 'M' + (left - 8) + ' ' + crisp(yOf(v)) + 'H' + right });
    add('text', { x: left - 9, y: Math.round(yOf(v)) + 4 }, v);
  }
  days.forEach(function (day, i) {
    var x = left + step * i;
    add('path', { 'class': i ? 'grid-line' : 'axis-line', d: 'M' + crisp(x) + ' ' + top + 'V' + (bottom + 10) });
    var ax = Math.round(x + step / 2) + 2, ay = bottom + 12;
    add('text', { x: ax, y: ay + 4, transform: 'rotate(-45 ' + ax + ' ' + ay + ')' }, day);
    if (rain[day]) {
      var w = Math.round(step * 0.72) - 2, bx = Math.round(x + (step - w) / 2), by = Math.round(yOf(rain[day])) + 1;
      add('path', { 'class': 'bar', d: 'M' + bx + ' ' + bottom + 'V' + by + 'h' + w + 'V' + bottom });
      add('path', { 'class': 'bar-edge', d: 'M' + bx + ' ' + (bottom + 1) + 'V' + by + 'h' + w + 'V' + (bottom + 1) });
    }
  });
})();
```
